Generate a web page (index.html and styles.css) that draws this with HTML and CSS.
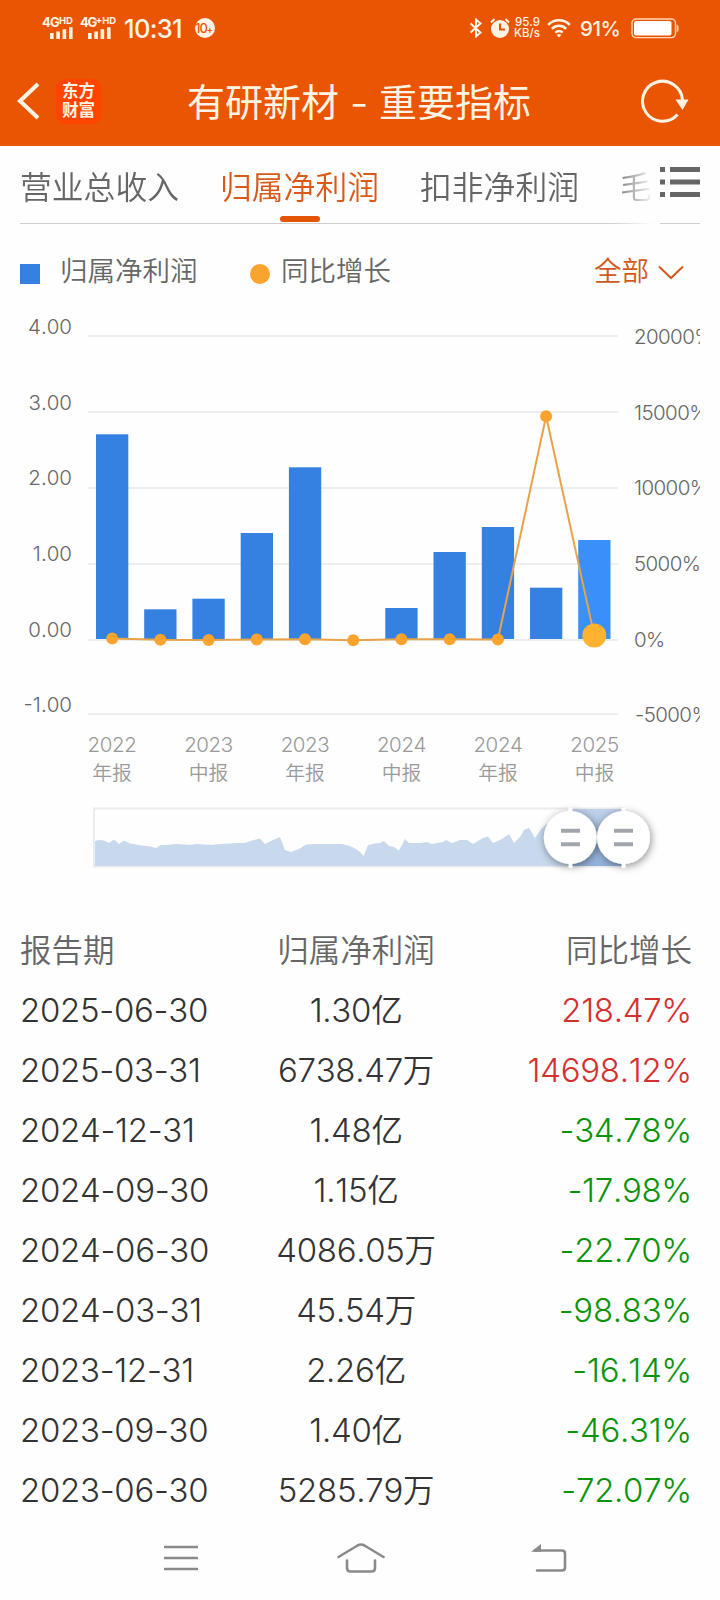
FILE: index.html
```html
<!DOCTYPE html>
<html lang="zh-CN">
<head>
    <meta charset="UTF-8">
    <meta name="viewport" content="width=device-width, initial-scale=1.0">
    <title>有研新材 - 重要指标</title>
    <link rel="stylesheet" href="styles.css">
</head>
<body>

<header>
    <!-- 状态栏 -->
    <div class="status">
        <div class="signal">
            <div class="net">4G<sup>HD</sup></div>
            <svg width="24" height="12"><path d="M1 12V6h3.600v6zM7.300 12V4.500h3.600v7.500zM13.600 12V2.200h3.600V12zM20 12V.3h3.600V12z" fill="#fff4e4"/></svg>
        </div>
        <div class="signal second">
            <div class="net">4G<sup>+HD</sup></div>
            <svg width="24" height="12"><path d="M1 12V6h3.600v6zM7.300 12V4.500h3.600v7.500zM13.600 12V2.200h3.600V12zM20 12V.3h3.600V12z" fill="#fff4e4"/></svg>
        </div>
        <span class="clock">10:31</span>
        <span class="count">10<b>+</b></span>

        <svg class="bluetooth" width="14" height="20" viewBox="0 0 14 20"><path d="M1.500 5.500 11.500 14.500 7 18.500V1.500l4.500 4L1.500 14.500" fill="none" stroke="#fff4e4" stroke-width="2"/></svg>
        <svg class="alarm" width="20" height="20" viewBox="0 0 20 20"><circle cx="10" cy="11" r="9" fill="#fff4e4"/><path d="M1 4.500 4.500 1M19 4.500 15.500 1" stroke="#fff4e4" stroke-width="2"/><path d="M10 5.500v6h5" fill="none" stroke="#ea5504" stroke-width="2"/></svg>
        <div class="speed">95.9<br>KB/s</div>
        <svg class="wifi" width="24" height="20" viewBox="0 0 24 20"><path d="M1.200 6.800C7 .8 17 .8 22.800 6.800M4.900 10.800c4-4 10.200-4 14.200 0M8.300 14.500c2.300-1.900 5.100-1.900 7.400 0" fill="none" stroke="#fff4e4" stroke-width="2.600"/><path d="M9.700 17 12 19.600 14.300 17a3.500 3.500 0 0 0-4.600 0z" fill="#fff4e4"/></svg>
        <span class="percent">91%</span>
        <svg class="battery" width="49" height="21" viewBox="0 0 49 21"><rect x="1" y="1" width="43.500" height="18.600" rx="4" fill="none" stroke="#ffd6b4" stroke-width="1.400"/><rect x="3" y="3" width="37.500" height="14.600" rx="2" fill="#fff"/><path d="M45.700 6.500c2.600.3 2.600 7.500 0 7.800z" fill="#ffd6b4"/></svg>
    </div>

    <!-- 标题栏 -->
    <div class="title-bar">
        <svg class="back" width="24" height="38" viewBox="0 0 24 38"><path d="M21 2 3 19 21 36" fill="none" stroke="#fff4e4" stroke-width="4"/></svg>
        <div class="logo">东方<br>财富</div>
        <h1>有研新材<span>-</span>重要指标</h1>
        <svg class="refresh" width="50" height="46" viewBox="0 0 50 46"><path d="M36.500 36.500A20 20 0 1 1 41.500 22" fill="none" stroke="#fff4e4" stroke-width="3"/><path d="M34.500 21.500h13L41.500 32z" fill="#fff4e4"/></svg>
    </div>
</header>

<!-- 指标切换 -->
<nav class="tabs">
    <div class="tab-list">
        <span>营业总收入</span>
        <span class="active">归属净利润</span>
        <span>扣非净利润</span>
        <span>毛</span>
    </div>
    <div class="more">
        <svg width="40" height="30"><path d="M0 0h5v5H0zM10 0h30v5H10zM0 12.500h5v5H0zM10 12.500h30v5H10zM0 25h5v5H0zM10 25h30v5H10z" fill="#666"/></svg>
    </div>
</nav>

<!-- 图例 -->
<div class="legend">
    <i class="square"></i><span class="bar-name">归属净利润</span>
    <i class="dot"></i><span>同比增长</span>
    <span class="filter">全部</span>
    <svg width="26" height="15" viewBox="0 0 26 15"><path d="M1 1.500 13 13 25 1.500" fill="none" stroke="#cf5a1b" stroke-width="2"/></svg>
</div>

<!-- 图表 -->
<svg class="chart" width="700" height="600" viewBox="0 300 700 600">
    <defs>
        <filter id="shadow" x="-40%" y="-40%" width="180%" height="180%">
            <feDropShadow dx="1" dy="2" stdDeviation="4" flood-color="#000" flood-opacity=".45"/>
        </filter>
        <linearGradient id="window" x1="0" y1="0" x2="0" y2="1">
            <stop offset="0" stop-color="#bfd2ea"/>
            <stop offset="1" stop-color="#91b2da"/>
        </linearGradient>
    </defs>
    <path class="grid" d="M88 336H618M88 412H618M88 488H618M88 564H618M88 640H618M88 714H618"/>

    <g class="axis left">
        <text x="72" y="334">4.00</text>
        <text x="72" y="410">3.00</text>
        <text x="72" y="485">2.00</text>
        <text x="72" y="561">1.00</text>
        <text x="72" y="637">0.00</text>
        <text x="72" y="712">-1.00</text>
    </g>
    <g class="axis right">
        <text x="634" y="344">20000%</text>
        <text x="634" y="420">15000%</text>
        <text x="634" y="495">10000%</text>
        <text x="634" y="571">5000%</text>
        <text x="634" y="647">0%</text>
        <text x="635" y="722">-5000%</text>
    </g>

    <g class="bars">
        <rect x="96" y="434.300" width="32.300" height="204.700"/>
        <rect x="144.200" y="609.300" width="32.300" height="29.700"/>
        <rect x="192.400" y="598.700" width="32.300" height="40.300"/>
        <rect x="240.700" y="533" width="32.300" height="106"/>
        <rect x="288.900" y="467.300" width="32.300" height="171.700"/>
        <rect x="385.300" y="608" width="32.300" height="31"/>
        <rect x="433.500" y="552" width="32.300" height="87"/>
        <rect x="481.800" y="527" width="32.300" height="112"/>
        <rect x="530" y="587.700" width="32.300" height="51.300"/>
        <rect class="current" x="578.200" y="540" width="32.300" height="99"/>
    </g>

    <polyline class="line" points="112.200,638.500 160.400,639.800 208.600,640 256.800,639.500 305,639.200 353.200,640.300 401.400,639.300 449.700,639.300 497.900,639.500 546.100,416.200 594.300,635.600"/>
    <g class="points">
        <circle cx="112.200" cy="638.500" r="6"/>
        <circle cx="160.400" cy="639.800" r="6"/>
        <circle cx="208.600" cy="640" r="6"/>
        <circle cx="256.800" cy="639.500" r="6"/>
        <circle cx="305" cy="639.200" r="6"/>
        <circle cx="353.200" cy="640.300" r="6"/>
        <circle cx="401.400" cy="639.300" r="6"/>
        <circle cx="449.700" cy="639.300" r="6"/>
        <circle cx="497.900" cy="639.500" r="6"/>
        <circle cx="546.100" cy="416.200" r="6"/>
        <circle class="current" cx="594.300" cy="635.600" r="12"/>
    </g>

    <g class="period">
        <text x="112" y="752">2022</text><text class="kind" x="112" y="779.500">年报</text>
        <text x="208.500" y="752">2023</text><text class="kind" x="208.500" y="779.500">中报</text>
        <text x="305" y="752">2023</text><text class="kind" x="305" y="779.500">年报</text>
        <text x="401.500" y="752">2024</text><text class="kind" x="401.500" y="779.500">中报</text>
        <text x="498" y="752">2024</text><text class="kind" x="498" y="779.500">年报</text>
        <text x="594.500" y="752">2025</text><text class="kind" x="594.500" y="779.500">中报</text>
    </g>

    <!-- 区间滑块 -->
    <rect x="94" y="808.500" width="530" height="58" fill="none" stroke="#eaecee" stroke-width="2"/>
    <path fill="#c8d9ee" d="M95 866V841L99 840 104 840.500 109 843 114 839.500 119 844 124 840.500 130 843.500 142 845.500 150 846.500 156 848 161 845 166 845 177 844 190 845 197 844 212 845 220 844 238 843 245 843 252 840.500 260 838.500 265 844 273 840 280 837 285 850 291 852 299 849 306 844.500 315 844 342 844 350 846 356 849 360 852 363.500 856 368 845 375 843.500 380 843 384 841 389 846 394 847 399 850.500 405 839 409 843 420 843 427 842 432 844 443 842 446 840 452 843 460 840 467 840 473 844 483 838 488 836.500 493 843 502 839 509 834 514 843 520 837 524 830 529 828 535 838 541 829 548 823 570 815V866z"/>
    <rect x="570.500" y="809" width="53" height="57" fill="url(#window)"/>
    <g fill="#fff" filter="url(#shadow)">
        <circle cx="570.300" cy="837.500" r="26.500"/>
        <circle cx="623.500" cy="837.500" r="26.500"/>
    </g>
    <path d="M570.500 807.500V868M623.500 807.500V868" stroke="#fff" stroke-width="4"/>
    <path d="M561 830.700h19M561 844.200h19M614 830.700h19M614 844.200h19" stroke="#a2a6ac" stroke-width="4"/>
</svg>

<!-- 数据表 -->
<table>
    <thead>
        <tr><th>报告期</th><th>归属净利润</th><th>同比增长</th></tr>
    </thead>
    <tbody>
        <tr><td>2025-06-30</td><td>1.30<em>亿</em></td><td class="up">218.47%</td></tr>
        <tr><td>2025-03-31</td><td>6738.47<em>万</em></td><td class="up">14698.12%</td></tr>
        <tr><td>2024-12-31</td><td>1.48<em>亿</em></td><td class="down">-34.78%</td></tr>
        <tr><td>2024-09-30</td><td>1.15<em>亿</em></td><td class="down">-17.98%</td></tr>
        <tr><td>2024-06-30</td><td>4086.05<em>万</em></td><td class="down">-22.70%</td></tr>
        <tr><td>2024-03-31</td><td>45.54<em>万</em></td><td class="down">-98.83%</td></tr>
        <tr><td>2023-12-31</td><td>2.26<em>亿</em></td><td class="down">-16.14%</td></tr>
        <tr><td>2023-09-30</td><td>1.40<em>亿</em></td><td class="down">-46.31%</td></tr>
        <tr><td>2023-06-30</td><td>5285.79<em>万</em></td><td class="down">-72.07%</td></tr>
    </tbody>
</table>

<!-- 系统导航 -->
<footer>
    <svg width="34" height="26" viewBox="0 0 34 26"><path d="M1 2h32M1 13h32M1 24h32"/></svg>
    <svg width="48" height="32" viewBox="0 0 48 32"><path d="M1.500 15 20.500 3.500Q24 1.500 27.500 3.500L46.500 15M10 18.500V26q0 3.500 3.500 3.500h21q3.500 0 3.500-3.500v-7.500"/></svg>
    <svg class="return" width="36" height="28" viewBox="0 0 36 28"><path d="M4 6.500H31q3 0 3 3V23.500q0 3-3 3H6"/><path class="tip" d="M0 7.800 10 0V7.800z"/></svg>
</footer>

</body>
</html>
```

FILE: styles.css
```css
/* 全体 */
* {
    box-sizing: border-box;
}

body {
    width: 720px;
    height: 1600px;
    margin: 0;
    overflow: hidden;
    background: #fefefe;
    color: #333;
    font-family: Inter, "Noto Sans CJK SC", sans-serif;
    font-weight: 350;
    font-kerning: none;
}

svg {
    display: block;
    flex: none;
}

/* 头部 */
header {
    height: 146px;
    background: #ea5504;
    color: #fff4e4;
}

.status {
    display: flex;
    align-items: center;
    height: 56px;
    padding-left: 42px;
    white-space: nowrap;
}

.signal {
    width: 38px;
    height: 22px;
}

.signal svg {
    margin: -1px 0 0 7px;
}

.net {
    height: 11px;
    font-size: 13px;
    line-height: 11px;
    font-weight: 700;
    letter-spacing: -0.8px;
}

.net sup {
    font-size: 9.500px;
    line-height: 0;
    vertical-align: 3px;
    letter-spacing: 0;
}

.second .net {
    letter-spacing: -1.4px;
}

.clock {
    width: 62px;
    margin-left: 6px;
    font-size: 25.500px;
    font-weight: 500;
    letter-spacing: -0.7px;
}

.count {
    width: 20px;
    height: 20px;
    margin-left: 9px;
    border-radius: 50%;
    background: #fff4e4;
    color: #ea5504;
    font-size: 13px;
    line-height: 20px;
    font-weight: 500;
    letter-spacing: -1px;
}

.count b {
    font-size: 9px;
}

.bluetooth {
    margin-left: 254px;
}

.alarm {
    margin-left: 7px;
}

.speed {
    width: 27px;
    margin-left: 3px;
    font-size: 11.500px;
    line-height: 11px;
    font-weight: 500;
    text-align: right;
}

.wifi {
    margin-left: 7px;
}

.percent {
    width: 42px;
    margin-left: 9px;
    font-size: 20.500px;
    font-weight: 500;
    letter-spacing: -0.5px;
}

.battery {
    margin-left: 9px;
}

.title-bar {
    display: flex;
    align-items: center;
    height: 90px;
    padding-left: 17px;
}

.logo {
    width: 45px;
    height: 45px;
    margin-left: 15px;
    padding-top: 2px;
    border-radius: 9px;
    background: #ff4400;
    font-family: "Noto Sans CJK SC", sans-serif;
    font-size: 16.500px;
    line-height: 19px;
    font-weight: 700;
    text-align: center;
}

h1 {
    display: flex;
    width: 346px;
    margin: 0 0 3px 86px;
    font-family: "Noto Sans CJK SC", sans-serif;
    font-size: 38px;
    line-height: 56px;
    font-weight: 400;
    white-space: nowrap;
}

h1 span {
    width: 40px;
    text-align: center;
    transform: scaleX(1.3);
}

.refresh {
    margin-left: 108px;
}

/* 指标切换 */
.tabs {
    display: flex;
    height: 78px;
    padding: 0 20px;
}

.tab-list {
    display: flex;
    gap: 40px;
    width: 640px;
    overflow: hidden;
    border-bottom: 1px solid #d0d0d0;
    color: #666;
    font-size: 31.800px;
    line-height: 84px;
    white-space: nowrap;
    -webkit-mask-image: linear-gradient(to right, #000 592px, transparent 634px);
    mask-image: linear-gradient(to right, #000 592px, transparent 634px);
}

.tab-list span {
    flex: none;
    min-width: 160px;
    height: 77px;
}

.tab-list .active {
    position: relative;
    color: #d95a18;
}

.tab-list .active::after {
    content: "";
    position: absolute;
    left: 60px;
    bottom: 1px;
    width: 40px;
    height: 6px;
    border-radius: 3px;
    background: #e25507;
}

.more {
    width: 40px;
    padding-top: 21px;
    border-bottom: 1px solid #d0d0d0;
}

/* 图例 */
.legend {
    display: flex;
    align-items: center;
    height: 76px;
    padding: 18px 36px 0 20px;
    color: #666;
    font-size: 27.500px;
    line-height: 40px;
}

.legend i {
    width: 20px;
    height: 20px;
    margin-top: 5px;
}

.square {
    background: #3481e1;
}

.dot {
    border-radius: 50%;
    background: #faa32e;
    margin-right: 11px;
}

.bar-name {
    width: 190px;
    margin-left: 20px;
}

.filter {
    margin-left: auto;
    margin-right: 9px;
    color: #cf5a1b;
}

.legend svg {
    margin-top: 3px;
}

/* 图表 */
.axis {
    fill: #666;
    font-size: 20.500px;
}

.left {
    text-anchor: end;
}

.right {
    letter-spacing: -0.6px;
}

.grid {
    stroke: #eee;
    stroke-width: 2;
}

.bars {
    fill: #3481e1;
}

.bars .current {
    fill: #3b8ff8;
}

.line {
    fill: none;
    stroke: #e8a34a;
    stroke-width: 2;
}

.points {
    fill: #faa32e;
}

.points .current {
    fill: #ffb22f;
}

.period {
    fill: #999;
    font-size: 20.500px;
    letter-spacing: -0.4px;
    text-anchor: middle;
}

.period .kind {
    font-size: 19.800px;
    letter-spacing: 0;
}

/* 数据表 */
table {
    width: 672px;
    margin: 20px 0 0 20px;
    border-collapse: collapse;
    table-layout: fixed;
}

th, td {
    height: 60px;
    padding: 0;
    font-size: 33px;
    line-height: 40px;
    font-weight: 350;
    letter-spacing: -0.3px;
    text-align: center;
    white-space: nowrap;
}

th {
    padding-top: 2px;
    color: #666;
    font-size: 31.500px;
    letter-spacing: 0;
}

th:first-child, td:first-child {
    text-align: left;
}

th:last-child, td:last-child {
    text-align: right;
}

em {
    font-size: 31.500px;
    font-style: normal;
}

.up {
    color: #d33030;
}

.down {
    color: #0c930c;
}

/* 系统导航 */
footer {
    display: flex;
    align-items: center;
    gap: 139px;
    height: 76px;
    padding-left: 164px;
}

footer path {
    fill: none;
    stroke: #8a8a8a;
    stroke-width: 2.600;
    stroke-linecap: round;
}

.return {
    margin-left: 7px;
}

footer .tip {
    fill: #8a8a8a;
    stroke: none;
}
```
